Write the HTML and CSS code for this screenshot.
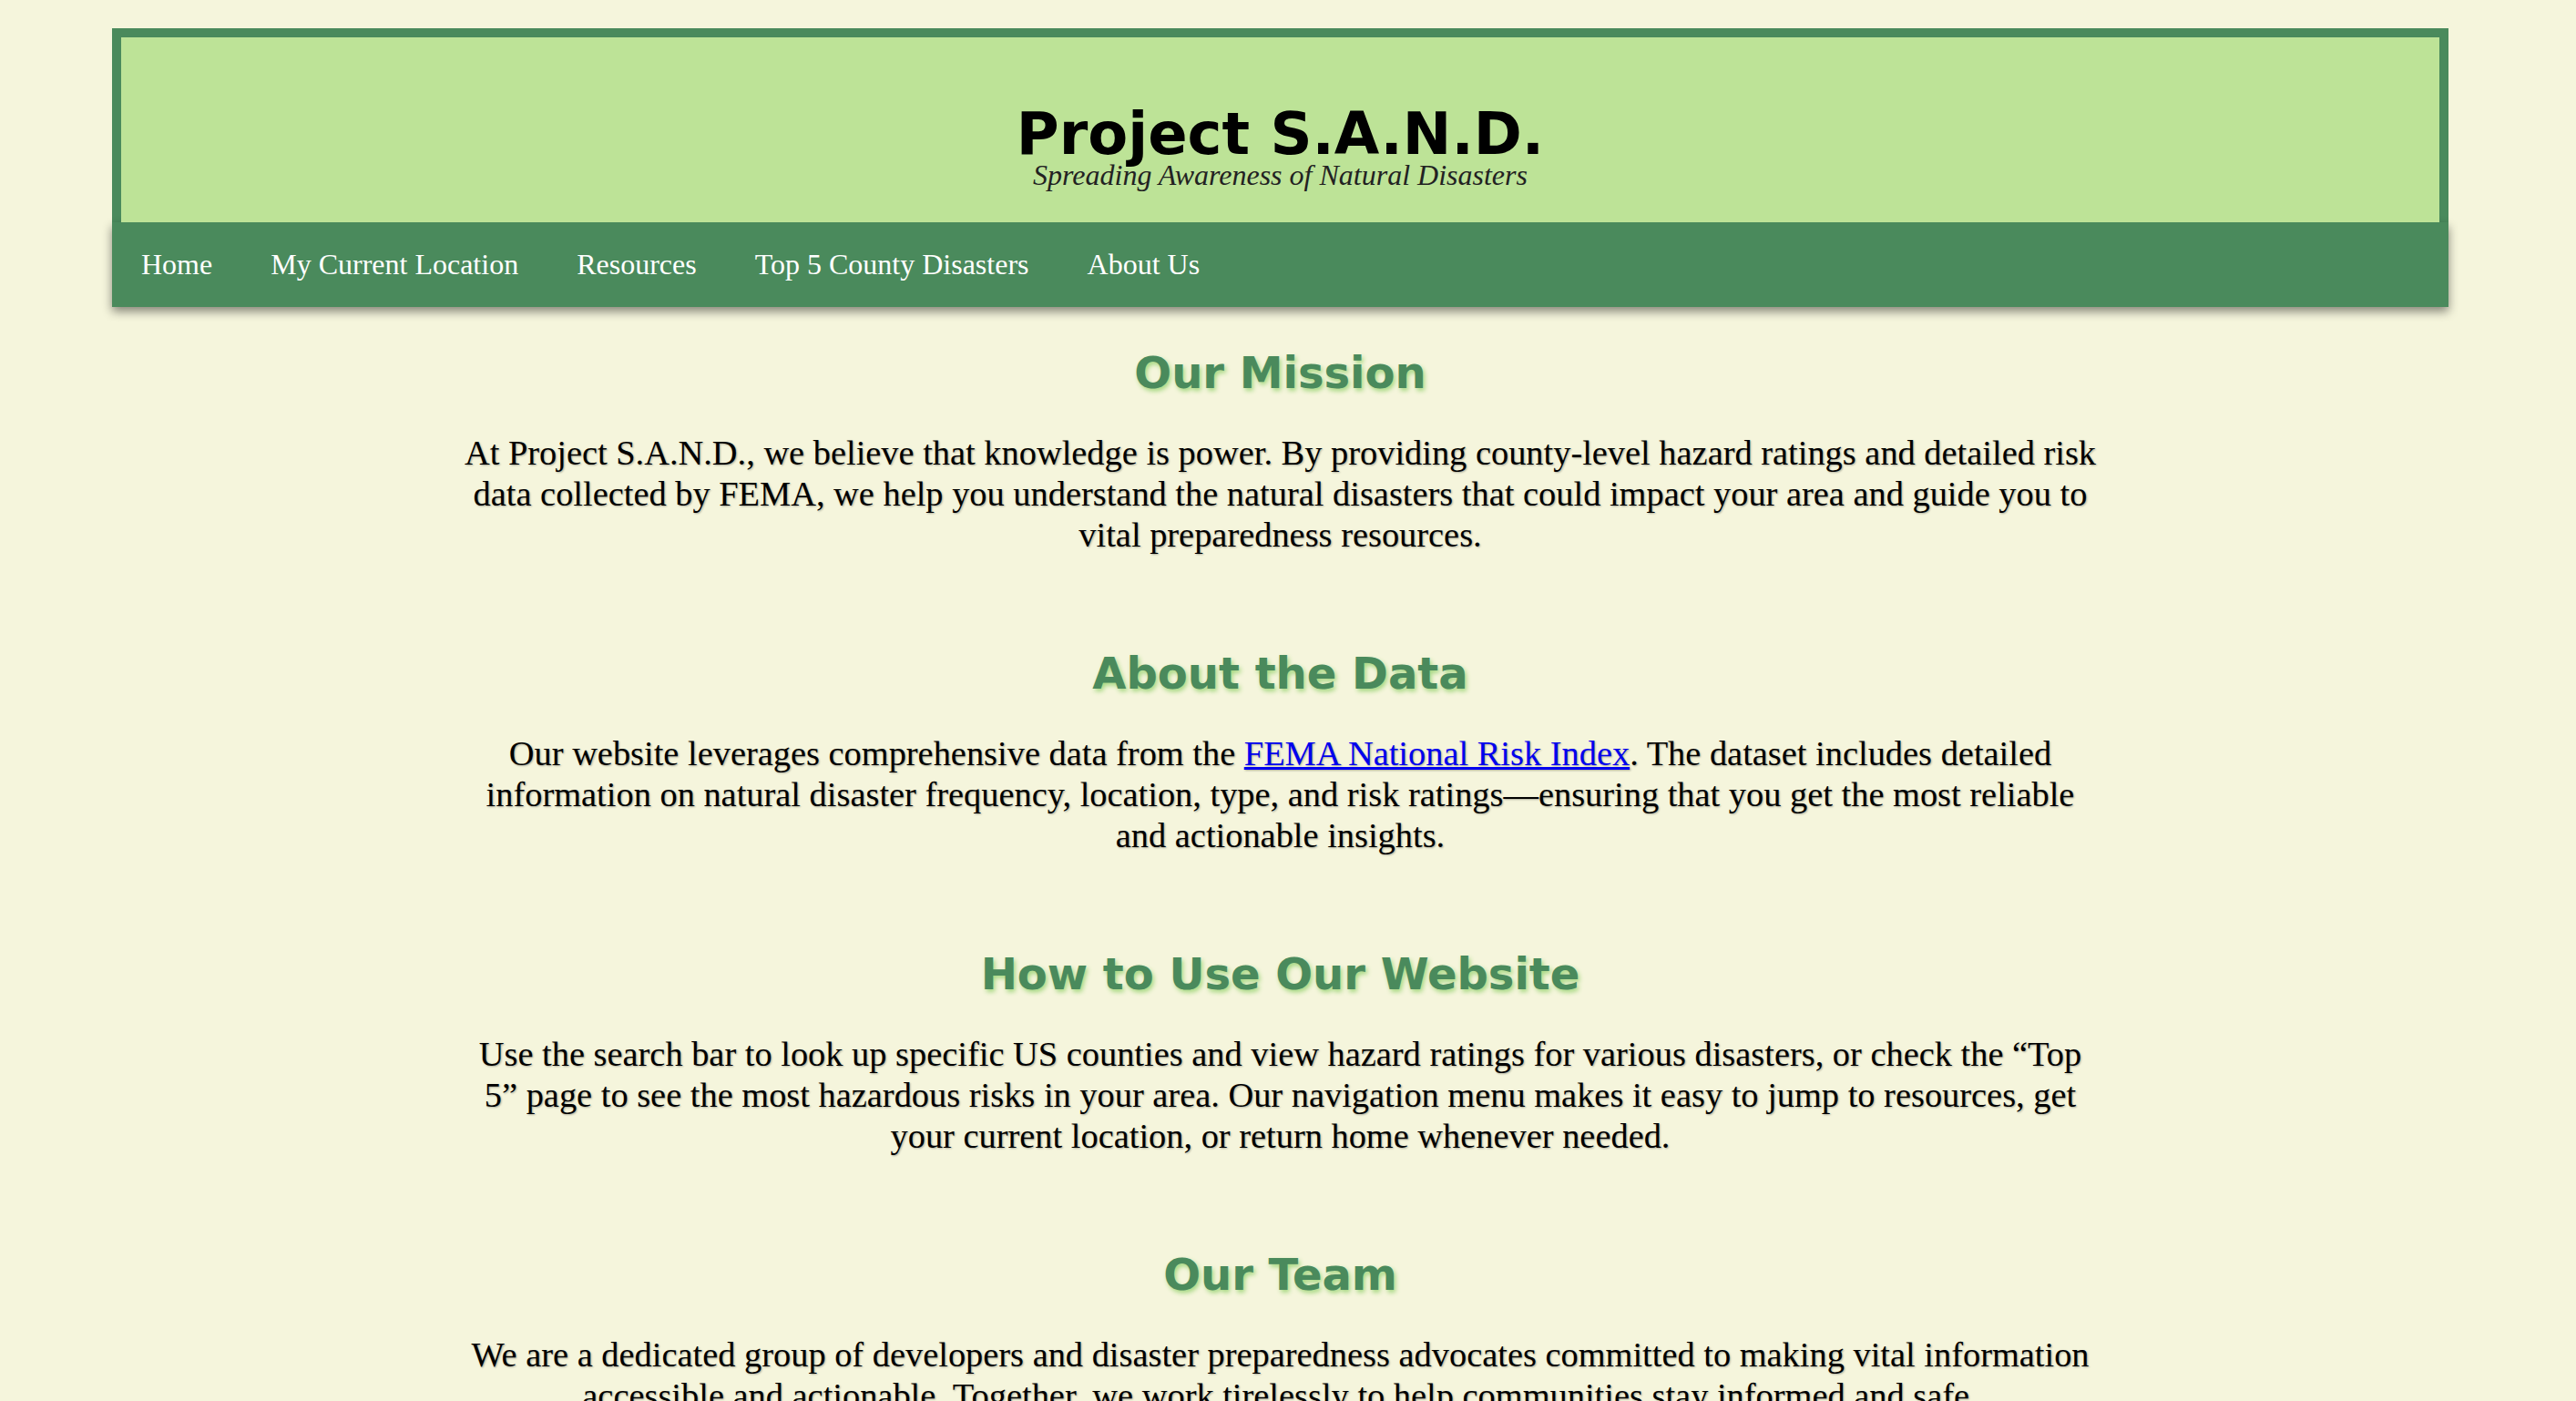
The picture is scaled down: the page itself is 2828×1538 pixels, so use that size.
FILE: index.html
```html
<!DOCTYPE html>
<html lang="en">
<head>
<meta charset="utf-8">
<title>Project S.A.N.D.</title>
<link rel="stylesheet" href="styles.css">
</head>
<body>
<div class="page">
  <header class="site-header">
    <div class="banner">
      <h1 class="title">Project S.A.N.D.</h1>
      <p class="tagline">Spreading Awareness of Natural Disasters</p>
    </div>
    <nav class="nav">
      <a href="#" class="nav-link">Home</a>
      <a href="#" class="nav-link">My Current Location</a>
      <a href="#" class="nav-link">Resources</a>
      <a href="#" class="nav-link">Top 5 County Disasters</a>
      <a href="#" class="nav-link">About Us</a>
    </nav>
  </header>
  <main class="content">
    <section class="block">
      <h2 class="block-title">Our Mission</h2>
      <p class="block-text">At Project S.A.N.D., we believe that knowledge is power. By providing county-level hazard ratings and detailed risk data collected by FEMA, we help you understand the natural disasters that could impact your area and guide you to vital preparedness resources.</p>
    </section>
    <section class="block">
      <h2 class="block-title">About the Data</h2>
      <p class="block-text">Our website leverages comprehensive data from the <a href="#" class="text-link">FEMA National Risk Index</a>. The dataset includes detailed information on natural disaster frequency, location, type, and risk ratings—ensuring that you get the most reliable and actionable insights.</p>
    </section>
    <section class="block">
      <h2 class="block-title">How to Use Our Website</h2>
      <p class="block-text">Use the search bar to look up specific US counties and view hazard ratings for various disasters, or check the “Top 5” page to see the most hazardous risks in your area. Our navigation menu makes it easy to jump to resources, get your current location, or return home whenever needed.</p>
    </section>
    <section class="block">
      <h2 class="block-title">Our Team</h2>
      <p class="block-text">We are a dedicated group of developers and disaster preparedness advocates committed to making vital information accessible and actionable. Together, we work tirelessly to help communities stay informed and safe.</p>
    </section>
  </main>
</div>
</body>
</html>
```

FILE: styles.css
```css
html, body {
  margin: 0;
  padding: 0;
  background: #f5f5dc;
}
body {
  font-family: "Liberation Serif", "Times New Roman", serif;
  color: #000;
}
.page {
  width: 2565px;
  margin: 31px 0 0 123px;
}
.site-header {
  background: #4a8a5c;
  padding: 10px 10px 0;
}
.banner {
  position: relative;
  z-index: 1;
  background: #bde397;
  text-align: center;
  padding: 74px 0 39px;
}
.title {
  margin: 0;
  font-family: Verdana, "DejaVu Sans", sans-serif;
  font-weight: bold;
  font-size: 64px;
  line-height: 64px;
  color: #000;
}
.tagline {
  margin: 0;
  font-style: italic;
  font-size: 32px;
  line-height: 26px;
  color: #222;
}
.nav {
  display: flex;
  background: #4a8a5c;
  margin: 0 -10px;
  box-shadow: 0 5px 10px rgba(0, 0, 0, 0.45);
}
.nav-link {
  color: #fff;
  text-decoration: none;
  font-size: 32px;
  padding: 28px 32px;
  line-height: 37px;
}
.content {
  width: 1796px;
  margin: 0 auto;
  padding-top: 44px;
  text-align: center;
}
.block {
  margin-bottom: 101px;
}
.block-title {
  margin: 0 0 38px;
  font-family: Verdana, "DejaVu Sans", sans-serif;
  font-weight: bold;
  font-size: 48px;
  line-height: 56px;
  color: #4a8a5c;
  text-shadow: 2px 3px 5px #a6d882;
}
.block-text {
  margin: 0;
  font-size: 38.4px;
  line-height: 45px;
  text-shadow: 1px 1px 2px rgba(0, 0, 0, 0.3);
}
.text-link {
  color: #0000ee;
}
```
